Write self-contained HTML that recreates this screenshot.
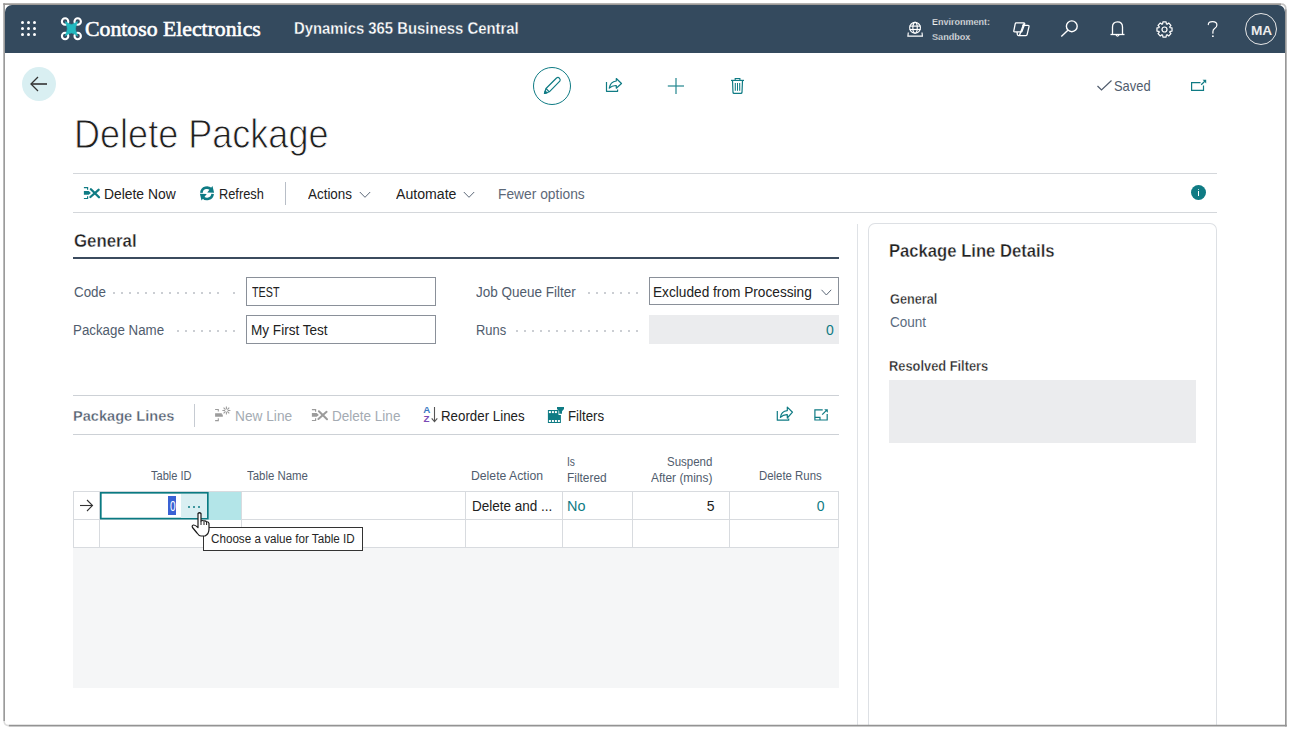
<!DOCTYPE html><html><head><meta charset='utf-8'><style>
html,body{margin:0;padding:0;background:#fff;width:1290px;height:730px;overflow:hidden;position:relative}
.t{position:absolute;line-height:1;white-space:nowrap;transform-origin:0 0}
.b{position:absolute;box-sizing:border-box;overflow:visible}
</style></head><body>
<div class='b' style='left:5px;top:5px;width:1280px;height:47.5px;background:#344a5e;border-radius:7px 7px 0 0'></div>
<div class='b' style='left:20.8px;top:20.9px;width:3px;height:3px;background:#fff;border-radius:50%'></div>
<div class='b' style='left:20.8px;top:27.0px;width:3px;height:3px;background:#fff;border-radius:50%'></div>
<div class='b' style='left:20.8px;top:33.099999999999994px;width:3px;height:3px;background:#fff;border-radius:50%'></div>
<div class='b' style='left:26.9px;top:20.9px;width:3px;height:3px;background:#fff;border-radius:50%'></div>
<div class='b' style='left:26.9px;top:27.0px;width:3px;height:3px;background:#fff;border-radius:50%'></div>
<div class='b' style='left:26.9px;top:33.099999999999994px;width:3px;height:3px;background:#fff;border-radius:50%'></div>
<div class='b' style='left:33.0px;top:20.9px;width:3px;height:3px;background:#fff;border-radius:50%'></div>
<div class='b' style='left:33.0px;top:27.0px;width:3px;height:3px;background:#fff;border-radius:50%'></div>
<div class='b' style='left:33.0px;top:33.099999999999994px;width:3px;height:3px;background:#fff;border-radius:50%'></div>
<svg class='b' style='left:56px;top:12px;' width='32' height='34' viewBox='0 0 32 34'>
<g fill='none' stroke='#fff' stroke-width='2.1'>
<circle cx='9.1' cy='9.5' r='3.2'/><circle cx='21.7' cy='9.5' r='3.2'/><circle cx='9.1' cy='24' r='3.2'/><circle cx='21.7' cy='24' r='3.2'/>
</g>
<path d='M9.2 9.5 L13.3 11.83 Q15.4 13 17.5 11.83 L21.6 9.5 L19.93 14.3 Q19.1 16.7 19.93 19.1 L21.6 23.9 L17.5 21.57 Q15.4 20.4 13.3 21.57 L9.2 23.9 L10.87 19.1 Q11.7 16.7 10.87 14.3 Z' fill='#22b8bf' stroke='#22b8bf' stroke-width='0.6' stroke-linejoin='round'/>
</svg>
<span class='t' style='left:84.61px;top:17.72px;font-size:22.0px;font-weight:400;font-family:"Liberation Serif",sans-serif;color:#ffffff;transform:scaleX(0.9886);-webkit-text-stroke:0.6px #fff;'>Contoso Electronics</span>
<span class='t' style='left:293.77px;top:21.4px;font-size:16.0px;font-weight:700;font-family:"Liberation Sans",sans-serif;color:#ffffff;transform:scaleX(0.9288);-webkit-text-stroke:0.3px #344a5e;'>Dynamics 365 Business Central</span>
<svg class='b' style='left:906px;top:21px;' width='18' height='17' viewBox='0 0 18 17'>
<g fill='none' stroke='#fff' stroke-width='1.15'>
<circle cx='9.05' cy='6.8' r='5.4'/><ellipse cx='9.05' cy='6.8' rx='2.2' ry='5.4'/><line x1='3.6' y1='5.1' x2='14.5' y2='5.1'/><line x1='3.6' y1='8.5' x2='14.5' y2='8.5'/>
<path d='M2.3 11.5 L1.9 15.1 H16.4 L16 11.5'/>
</g></svg>
<span class='t' style='left:932.2px;top:16.73px;font-size:9.5px;font-weight:700;font-family:"Liberation Sans",sans-serif;color:#f0f0f0;transform:scaleX(0.9459);-webkit-text-stroke:0.25px #344a5e;'>Environment:</span>
<span class='t' style='left:932.2px;top:31.68px;font-size:9.5px;font-weight:700;font-family:"Liberation Sans",sans-serif;color:#f0f0f0;transform:scaleX(0.9575);-webkit-text-stroke:0.25px #344a5e;'>Sandbox</span>
<svg class='b' style='left:1008px;top:17px;' width='26' height='24' viewBox='0 0 26 24'>
<g fill='none' stroke='#fff' stroke-width='1.3' stroke-linejoin='round'>
<path d='M8.2 5.9 H15.8 Q17 5.9 16.6 7.2 L13.8 14.8 H6.6 Q5.6 14.8 5.8 13.8 L7.2 6.8 Q7.4 5.9 8.2 5.9Z'/>
<path d='M14.3 8.4 H20 Q21.2 8.4 21 9.6 L19.1 17.7 Q18.9 18.6 18 18.6 H10.5 Q9.6 18.6 9.4 17.7 L9 14.8'/>
<line x1='15.9' y1='6.6' x2='11.4' y2='18.4'/>
</g></svg>
<svg class='b' style='left:1059px;top:19px;' width='21' height='20' viewBox='0 0 21 20'>
<g fill='none' stroke='#fff' stroke-width='1.4'>
<circle cx='12.8' cy='7.3' r='5.4'/><line x1='8.9' y1='11.2' x2='2.3' y2='17.6'/>
</g></svg>
<svg class='b' style='left:1109px;top:20px;' width='17' height='18' viewBox='0 0 17 18'>
<g fill='none' stroke='#fff' stroke-width='1.3'>
<path d='M3.5 14.5 V7 Q3.5 1.8 8.5 1.8 Q13.5 1.8 13.5 7 V14.5'/><line x1='1.5' y1='14.5' x2='15.5' y2='14.5'/>
<path d='M7 15 Q8.5 17.3 10 15'/>
</g></svg>
<svg class='b' style='left:1156.4px;top:20.6px;' width='17' height='17' viewBox='0 0 17 17'><g fill='none' stroke='#fff' stroke-width='1.2' stroke-linejoin='round'><path d='M13.98 6.61 L16.03 6.90 L16.03 10.10 L13.98 10.39 L13.71 11.04 L14.96 12.69 L12.69 14.96 L11.04 13.71 L10.39 13.98 L10.10 16.03 L6.90 16.03 L6.61 13.98 L5.96 13.71 L4.31 14.96 L2.04 12.69 L3.29 11.04 L3.02 10.39 L0.97 10.10 L0.97 6.90 L3.02 6.61 L3.29 5.96 L2.04 4.31 L4.31 2.04 L5.96 3.29 L6.61 3.02 L6.90 0.97 L10.10 0.97 L10.39 3.02 L11.04 3.29 L12.69 2.04 L14.96 4.31 L13.71 5.96Z'/><circle cx='8.5' cy='8.5' r='2.5'/></g></svg>
<svg class='b' style='left:1205px;top:19px;' width='16' height='20' viewBox='0 0 16 20'><g fill='none' stroke='#fff' stroke-width='1.2' stroke-linecap='round'><path d='M3.3 5.6 Q3.3 2.6 7.6 2.6 Q11.9 2.6 11.9 6 Q11.9 8.2 9.6 9.6 Q7.9 10.7 7.9 12.8 V14.2'/></g><circle cx='7.9' cy='17.2' r='0.9' fill='#fff'/></svg>
<div class='b' style='left:1244.6px;top:12.6px;width:32.6px;height:32.6px;border:1.2px solid #e6e6e6;border-radius:50%'></div>
<span class='t' style='left:1250.99px;top:24.32px;font-size:13.5px;font-weight:700;font-family:"Liberation Sans",sans-serif;color:#ececec;transform:scaleX(1.01);'>MA</span>
<div class='b' style='left:22px;top:67px;width:34px;height:34px;background:#d9eff2;border-radius:50%'></div>
<svg class='b' style='left:29px;top:75px;' width='20' height='18' viewBox='0 0 20 18'><g fill='none' stroke='#333' stroke-width='1.3'><path d='M9 2 L2 9 L9 16'/><line x1='2.3' y1='9' x2='18' y2='9' stroke-width='1.6'/></g></svg>
<div class='b' style='left:532.8px;top:66.8px;width:38px;height:38px;border:1.6px solid #0f7b84;border-radius:50%'></div>
<svg class='b' style='left:542px;top:76px;' width='20' height='20' viewBox='0 0 20 20'><g fill='none' stroke='#0f7b84' stroke-width='1.2' stroke-linejoin='round'><path d='M2.5 17.5 L4 12.5 L14.5 2 Q16.2 0.8 17.5 2.3 Q18.8 3.8 17.8 5.2 L7.3 15.8 Z'/><line x1='4' y1='12.5' x2='7.3' y2='15.8'/><path d='M2.5 17.5 L3.2 15 L5 16.8Z' fill='#0f7b84'/></g></svg>
<svg class='b' style='left:604px;top:77px;' width='19' height='17' viewBox='0 0 19 17'><g fill='none' stroke='#0f7b84' stroke-width='1.2' stroke-linejoin='round'><path d='M2.5 5 V14.3 H13.6 V12.4'/><path d='M5.3 11.2 Q6.2 4.6 12.3 4 V1.5 L17.5 6.5 L12.3 11.2 V8.5 Q8 8.3 5.3 11.2 Z'/></g></svg>
<svg class='b' style='left:666px;top:76px;' width='20' height='20' viewBox='0 0 20 20'><g stroke='#2a8b93' stroke-width='1.25'><line x1='1.8' y1='10' x2='18' y2='10'/><line x1='10' y1='2' x2='10' y2='18'/></g></svg>
<svg class='b' style='left:730px;top:77px;' width='15' height='18' viewBox='0 0 15 18'><g fill='none' stroke='#0f7b84' stroke-width='1.2'><path d='M5.2 3 V1.5 H9.9 V3' stroke-width='1.1'/><line x1='1' y1='3.4' x2='14' y2='3.4'/><path d='M2.5 3.4 L3 15.4 Q3.1 16.4 4 16.4 H11 Q11.9 16.4 12 15.4 L12.5 3.4'/><g stroke-width='1.05'><line x1='5.3' y1='6' x2='5.3' y2='13.8'/><line x1='7.5' y1='6' x2='7.5' y2='13.8'/><line x1='9.7' y1='6' x2='9.7' y2='13.8'/></g></g></svg>
<svg class='b' style='left:1096px;top:79px;' width='17' height='13' viewBox='0 0 17 13'><path d='M1.5 7 L5.5 11 L15.5 1.5' fill='none' stroke='#505c6d' stroke-width='1.2'/></svg>
<span class='t' style='left:1113.81px;top:78.67px;font-size:14.5px;font-weight:400;font-family:"Liberation Sans",sans-serif;color:#505c6d;transform:scaleX(0.89);'>Saved</span>
<svg class='b' style='left:1189px;top:78px;' width='19' height='15' viewBox='0 0 19 15'><g fill='none' stroke='#0f7b84' stroke-width='1.2'><path d='M11.5 4.6 H2.6 V12.3 H14.5 V7.4'/><path d='M12.2 6.7 L15.8 3.2'/></g><path d='M13.6 1.8 H17.2 V5.4Z' fill='#0f7b84'/></svg>
<span class='t' style='left:73.83px;top:113.58px;font-size:40.5px;font-weight:400;font-family:"Liberation Sans",sans-serif;color:#1f1f1f;transform:scaleX(0.8901);-webkit-text-stroke:0.9px #fff;'>Delete Package</span>
<div class='b' style='left:73px;top:173px;width:1144px;height:1px;background:#d4d7db'></div>
<div class='b' style='left:73px;top:212px;width:1144px;height:1px;background:#d4d7db'></div>
<svg class='b' style='left:83px;top:186px;' width='18' height='15' viewBox='0 0 18 15'><g fill='none' stroke='#0f7b84' stroke-width='1.2'><path d='M0.9 1.6 H4.6 V3.7'/><path d='M0.9 12.5 H4.6 V10.2'/></g><path d='M0.9 5 H5.7 L7.9 6.9 L5.7 8.8 H0.9 Z' fill='#0f7b84'/><g stroke='#0f7b84' stroke-width='2.3' stroke-linecap='round'><path d='M7.9 3.2 L16 11.2'/><path d='M15.6 3.8 L7.4 11'/></g></svg>
<span class='t' style='left:103.81px;top:186.7px;font-size:14.0px;font-weight:400;font-family:"Liberation Sans",sans-serif;color:#212121;transform:scaleX(0.9903);'>Delete Now</span>
<svg class='b' style='left:199px;top:185px;' width='16' height='17' viewBox='0 0 16 17'><g fill='none' stroke='#0f7b84' stroke-width='2.6'><path d='M2.35 7.8 A5.65 5.65 0 0 1 12.6 5.06'/><path d='M13.65 8.8 A5.65 5.65 0 0 1 3.4 11.54'/></g><path d='M13.5 1 L15.1 7.8 L8.2 7.5Z M2.5 15.6 L0.9 8.8 L7.8 9.1Z' fill='#0f7b84'/></svg>
<span class='t' style='left:218.59px;top:186.7px;font-size:14.0px;font-weight:400;font-family:"Liberation Sans",sans-serif;color:#212121;transform:scaleX(0.9146);'>Refresh</span>
<div class='b' style='left:285px;top:182px;width:1px;height:23px;background:#b8bec7'></div>
<span class='t' style='left:307.9px;top:186.7px;font-size:14.0px;font-weight:400;font-family:"Liberation Sans",sans-serif;color:#212121;transform:scaleX(0.9587);'>Actions</span>
<svg class='b' style='left:359px;top:191px;' width='12' height='8' viewBox='0 0 12 8'><path d='M0.8 1 L6 6.3 L11.2 1' fill='none' stroke='#5c6878' stroke-width='1'/></svg>
<span class='t' style='left:395.5px;top:186.7px;font-size:14.0px;font-weight:400;font-family:"Liberation Sans",sans-serif;color:#212121;transform:scaleX(1.0083);'>Automate</span>
<svg class='b' style='left:463px;top:191px;' width='12' height='8' viewBox='0 0 12 8'><path d='M0.8 1 L6 6.3 L11.2 1' fill='none' stroke='#5c6878' stroke-width='1'/></svg>
<span class='t' style='left:497.91px;top:186.7px;font-size:14.0px;font-weight:400;font-family:"Liberation Sans",sans-serif;color:#5c6878;transform:scaleX(0.9862);'>Fewer options</span>
<div class='b' style='left:1191px;top:185px;width:15px;height:15px;background:#0f7b84;border-radius:50%'></div>
<div class='b' style='left:1197.8px;top:188.8px;width:1.6px;height:1.6px;background:#fff;border-radius:50%'></div>
<div class='b' style='left:1197.8px;top:191.3px;width:1.6px;height:5.2px;background:#fff'></div>
<span class='t' style='left:73.5px;top:232.52px;font-size:17.5px;font-weight:700;font-family:"Liberation Sans",sans-serif;color:#212121;transform:scaleX(0.9609);-webkit-text-stroke:0.35px #fff;'>General</span>
<div class='b' style='left:73px;top:257px;width:766px;height:2px;background:#3b4b5e'></div>
<span class='t' style='left:73.5px;top:285.2px;font-size:14.0px;font-weight:400;font-family:"Liberation Sans",sans-serif;color:#505c6d;transform:scaleX(0.9545);'>Code</span>
<div class='b' style='left:113px;top:292px;width:2px;height:2px;background:#cbced3'></div>
<div class='b' style='left:121px;top:292px;width:2px;height:2px;background:#cbced3'></div>
<div class='b' style='left:129px;top:292px;width:2px;height:2px;background:#cbced3'></div>
<div class='b' style='left:137px;top:292px;width:2px;height:2px;background:#cbced3'></div>
<div class='b' style='left:145px;top:292px;width:2px;height:2px;background:#cbced3'></div>
<div class='b' style='left:153px;top:292px;width:2px;height:2px;background:#cbced3'></div>
<div class='b' style='left:161px;top:292px;width:2px;height:2px;background:#cbced3'></div>
<div class='b' style='left:169px;top:292px;width:2px;height:2px;background:#cbced3'></div>
<div class='b' style='left:177px;top:292px;width:2px;height:2px;background:#cbced3'></div>
<div class='b' style='left:185px;top:292px;width:2px;height:2px;background:#cbced3'></div>
<div class='b' style='left:193px;top:292px;width:2px;height:2px;background:#cbced3'></div>
<div class='b' style='left:201px;top:292px;width:2px;height:2px;background:#cbced3'></div>
<div class='b' style='left:209px;top:292px;width:2px;height:2px;background:#cbced3'></div>
<div class='b' style='left:217px;top:292px;width:2px;height:2px;background:#cbced3'></div>
<div class='b' style='left:233px;top:292px;width:2px;height:2px;background:#cbced3'></div>
<div class='b' style='left:246px;top:277px;width:190px;height:29px;border:1px solid #8a9099'></div>
<span class='t' style='left:252.4px;top:285.1px;font-size:14.0px;font-weight:400;font-family:"Liberation Sans",sans-serif;color:#212121;transform:scaleX(0.7667);'>TEST</span>
<span class='t' style='left:72.55px;top:322.9px;font-size:14.0px;font-weight:400;font-family:"Liberation Sans",sans-serif;color:#505c6d;transform:scaleX(0.9516);'>Package Name</span>
<div class='b' style='left:177px;top:330px;width:2px;height:2px;background:#cbced3'></div>
<div class='b' style='left:185px;top:330px;width:2px;height:2px;background:#cbced3'></div>
<div class='b' style='left:193px;top:330px;width:2px;height:2px;background:#cbced3'></div>
<div class='b' style='left:201px;top:330px;width:2px;height:2px;background:#cbced3'></div>
<div class='b' style='left:209px;top:330px;width:2px;height:2px;background:#cbced3'></div>
<div class='b' style='left:217px;top:330px;width:2px;height:2px;background:#cbced3'></div>
<div class='b' style='left:225px;top:330px;width:2px;height:2px;background:#cbced3'></div>
<div class='b' style='left:233px;top:330px;width:2px;height:2px;background:#cbced3'></div>
<div class='b' style='left:246px;top:315px;width:190px;height:29px;border:1px solid #8a9099'></div>
<span class='t' style='left:251.43px;top:323.1px;font-size:14.0px;font-weight:400;font-family:"Liberation Sans",sans-serif;color:#212121;transform:scaleX(0.9692);'>My First Test</span>
<span class='t' style='left:476.2px;top:285.1px;font-size:14.0px;font-weight:400;font-family:"Liberation Sans",sans-serif;color:#505c6d;transform:scaleX(0.9625);'>Job Queue Filter</span>
<div class='b' style='left:588px;top:292px;width:2px;height:2px;background:#cbced3'></div>
<div class='b' style='left:596px;top:292px;width:2px;height:2px;background:#cbced3'></div>
<div class='b' style='left:604px;top:292px;width:2px;height:2px;background:#cbced3'></div>
<div class='b' style='left:612px;top:292px;width:2px;height:2px;background:#cbced3'></div>
<div class='b' style='left:620px;top:292px;width:2px;height:2px;background:#cbced3'></div>
<div class='b' style='left:628px;top:292px;width:2px;height:2px;background:#cbced3'></div>
<div class='b' style='left:636px;top:292px;width:2px;height:2px;background:#cbced3'></div>
<div class='b' style='left:649px;top:277px;width:190px;height:28px;border:1px solid #8a9099'></div>
<span class='t' style='left:653.32px;top:285.1px;font-size:14.0px;font-weight:400;font-family:"Liberation Sans",sans-serif;color:#212121;transform:scaleX(0.9764);'>Excluded from Processing</span>
<svg class='b' style='left:820.5px;top:289px;' width='11' height='8' viewBox='0 0 11 8'><path d='M0.5 0.8 L5.35 6 L10.2 0.8' fill='none' stroke='#5c6878' stroke-width='1'/></svg>
<span class='t' style='left:475.58px;top:323.1px;font-size:14.0px;font-weight:400;font-family:"Liberation Sans",sans-serif;color:#505c6d;transform:scaleX(0.9219);'>Runs</span>
<div class='b' style='left:516px;top:330px;width:2px;height:2px;background:#cbced3'></div>
<div class='b' style='left:524px;top:330px;width:2px;height:2px;background:#cbced3'></div>
<div class='b' style='left:532px;top:330px;width:2px;height:2px;background:#cbced3'></div>
<div class='b' style='left:540px;top:330px;width:2px;height:2px;background:#cbced3'></div>
<div class='b' style='left:548px;top:330px;width:2px;height:2px;background:#cbced3'></div>
<div class='b' style='left:556px;top:330px;width:2px;height:2px;background:#cbced3'></div>
<div class='b' style='left:564px;top:330px;width:2px;height:2px;background:#cbced3'></div>
<div class='b' style='left:572px;top:330px;width:2px;height:2px;background:#cbced3'></div>
<div class='b' style='left:580px;top:330px;width:2px;height:2px;background:#cbced3'></div>
<div class='b' style='left:588px;top:330px;width:2px;height:2px;background:#cbced3'></div>
<div class='b' style='left:596px;top:330px;width:2px;height:2px;background:#cbced3'></div>
<div class='b' style='left:604px;top:330px;width:2px;height:2px;background:#cbced3'></div>
<div class='b' style='left:612px;top:330px;width:2px;height:2px;background:#cbced3'></div>
<div class='b' style='left:620px;top:330px;width:2px;height:2px;background:#cbced3'></div>
<div class='b' style='left:628px;top:330px;width:2px;height:2px;background:#cbced3'></div>
<div class='b' style='left:636px;top:330px;width:2px;height:2px;background:#cbced3'></div>
<div class='b' style='left:649px;top:315px;width:190px;height:29px;background:#ebecee'></div>
<span class='t' style='left:826.0px;top:323.1px;font-size:14.0px;font-weight:400;font-family:"Liberation Sans",sans-serif;color:#0f7b84;'>0</span>
<div class='b' style='left:857px;top:224px;width:1px;height:501px;background:#dfe2e6'></div>
<div class='b' style='left:868px;top:223px;width:349px;height:502px;border:1px solid #dde0e4;border-bottom:none;border-radius:7px 7px 0 0'></div>
<span class='t' style='left:888.9px;top:241.67px;font-size:18.5px;font-weight:700;font-family:"Liberation Sans",sans-serif;color:#212121;transform:scaleX(0.8995);-webkit-text-stroke:0.35px #fff;'>Package Line Details</span>
<span class='t' style='left:889.8px;top:292.0px;font-size:14.0px;font-weight:700;font-family:"Liberation Sans",sans-serif;color:#212121;transform:scaleX(0.9077);-webkit-text-stroke:0.35px #fff;'>General</span>
<span class='t' style='left:889.8px;top:314.78px;font-size:14.5px;font-weight:400;font-family:"Liberation Sans",sans-serif;color:#5a6b80;transform:scaleX(0.9333);'>Count</span>
<span class='t' style='left:888.88px;top:359.0px;font-size:14.0px;font-weight:700;font-family:"Liberation Sans",sans-serif;color:#212121;transform:scaleX(0.9178);-webkit-text-stroke:0.35px #fff;'>Resolved Filters</span>
<div class='b' style='left:889px;top:380px;width:307px;height:63px;background:#ebecee'></div>
<div class='b' style='left:73px;top:395px;width:766px;height:1px;background:#cdd1d6'></div>
<div class='b' style='left:73px;top:434px;width:766px;height:1px;background:#cdd1d6'></div>
<span class='t' style='left:72.56px;top:407.52px;font-size:15.5px;font-weight:700;font-family:"Liberation Sans",sans-serif;color:#505c6d;transform:scaleX(0.9415);-webkit-text-stroke:0.35px #fff;'>Package Lines</span>
<div class='b' style='left:194px;top:404px;width:1px;height:23px;background:#c6cbd2'></div>
<svg class='b' style='left:213px;top:406px;' width='19' height='16' viewBox='0 0 19 16'><g fill='none' stroke='#9c9c9c' stroke-width='1.1'><path d='M2.1 3.5 H5.3 V5.5'/><path d='M2.1 14.6 H5.3 V12.2'/></g><path d='M2.1 7.2 H8.8 V8.4 H9.8 V10.8 H2.1Z' fill='#9c9c9c'/><g stroke='#9c9c9c' stroke-width='1.1'><line x1='14.70' y1='4.50' x2='17.40' y2='4.50'/><line x1='14.32' y1='5.42' x2='16.23' y2='7.33'/><line x1='13.40' y1='5.80' x2='13.40' y2='8.50'/><line x1='12.48' y1='5.42' x2='10.57' y2='7.33'/><line x1='12.10' y1='4.50' x2='9.40' y2='4.50'/><line x1='12.48' y1='3.58' x2='10.57' y2='1.67'/><line x1='13.40' y1='3.20' x2='13.40' y2='0.50'/><line x1='14.32' y1='3.58' x2='16.23' y2='1.67'/></g></svg>
<span class='t' style='left:234.82px;top:408.9px;font-size:14.0px;font-weight:400;font-family:"Liberation Sans",sans-serif;color:#a4abb3;transform:scaleX(0.9789);'>New Line</span>
<svg class='b' style='left:311px;top:408px;' width='18' height='15' viewBox='0 0 18 15'><g fill='none' stroke='#9c9c9c' stroke-width='1.2'><path d='M0.9 1.6 H4.6 V3.7'/><path d='M0.9 12.5 H4.6 V10.2'/></g><path d='M0.9 5 H5.7 L7.9 6.9 L5.7 8.8 H0.9 Z' fill='#9c9c9c'/><g stroke='#9c9c9c' stroke-width='2.0' stroke-linecap='round'><path d='M7.9 3.2 L16 11.2'/><path d='M15.6 3.8 L7.4 11'/></g></svg>
<span class='t' style='left:331.93px;top:408.9px;font-size:14.0px;font-weight:400;font-family:"Liberation Sans",sans-serif;color:#a4abb3;transform:scaleX(0.9657);'>Delete Line</span>
<span class='t' style='left:423.3px;top:405.4px;font-size:9.8px;font-family:"Liberation Sans";color:#3a78c2;font-weight:700'>A</span>
<span class='t' style='left:423.5px;top:413.6px;font-size:9.8px;font-family:"Liberation Sans";color:#7b4bb5;font-weight:700'>Z</span>
<svg class='b' style='left:430px;top:406px;' width='9' height='17' viewBox='0 0 9 17'><g fill='none' stroke='#555' stroke-width='1.1'><line x1='4.5' y1='1' x2='4.5' y2='15.5'/><path d='M1.7 12.3 L4.5 15.6 L7.3 12.3'/></g></svg>
<span class='t' style='left:441.45px;top:408.9px;font-size:14.0px;font-weight:400;font-family:"Liberation Sans",sans-serif;color:#212121;transform:scaleX(0.9506);'>Reorder Lines</span>
<svg class='b' style='left:547px;top:406px;' width='18' height='18' viewBox='0 0 18 18'><path d='M0.9 3.9 H11.5 V9.1 H13.9 V16.9 H0.9Z' fill='#0f7b84'/><path d='M10 0.9 H17 V2.9 L15 5.2 V7.8 H12.2 V5.2 L10 2.9Z' fill='#0f7b84'/><g fill='#fff'><rect x='1.9' y='5.1' width='2' height='2'/><rect x='4.9' y='5.1' width='2' height='2'/><rect x='7.9' y='5.1' width='2' height='2'/><rect x='1.9' y='14' width='2' height='2'/><rect x='4.9' y='14' width='2' height='2'/><rect x='7.9' y='14' width='2' height='2'/><rect x='10.9' y='14' width='2' height='2'/></g></svg>
<span class='t' style='left:567.65px;top:408.9px;font-size:14.0px;font-weight:400;font-family:"Liberation Sans",sans-serif;color:#212121;transform:scaleX(0.9486);'>Filters</span>
<svg class='b' style='left:776px;top:406px;' width='18' height='16' viewBox='0 0 18 16'><g fill='none' stroke='#0f7b84' stroke-width='1.2' stroke-linejoin='round'><path d='M1.3 5 V14.2 H12.7 V12.5'/><path d='M4.4 11.3 Q5.2 5.2 11.3 4.6 V1.1 L16.5 6.2 L11.3 12 V8.6 Q7.2 8.4 4.4 11.3 Z'/></g></svg>
<svg class='b' style='left:813px;top:408px;' width='16' height='14' viewBox='0 0 16 14'><g fill='none' stroke='#0f7b84' stroke-width='1.2'><path d='M9.7 1.8 H1.9 V12 H14.2 V6.1'/><path d='M1.9 9.3 H7 V12'/><path d='M9.2 6.6 L13.4 2.4'/></g><path d='M11.2 1.2 H14.8 V4.8Z' fill='#0f7b84'/></svg>
<span class='t' style='left:150.5px;top:469.98px;font-size:12.5px;font-weight:400;font-family:"Liberation Sans",sans-serif;color:#505c6d;transform:scaleX(0.8848);'>Table ID</span>
<span class='t' style='left:247.0px;top:469.98px;font-size:12.5px;font-weight:400;font-family:"Liberation Sans",sans-serif;color:#505c6d;transform:scaleX(0.9134);'>Table Name</span>
<span class='t' style='left:470.92px;top:469.77px;font-size:12.5px;font-weight:400;font-family:"Liberation Sans",sans-serif;color:#505c6d;transform:scaleX(0.9778);'>Delete Action</span>
<span class='t' style='left:567.28px;top:456.38px;font-size:12.5px;font-weight:400;font-family:"Liberation Sans",sans-serif;color:#505c6d;transform:scaleX(0.8222);'>Is</span>
<span class='t' style='left:567.15px;top:471.98px;font-size:12.5px;font-weight:400;font-family:"Liberation Sans",sans-serif;color:#505c6d;transform:scaleX(0.9525);'>Filtered</span>
<span class='t' style='left:666.98px;top:456.38px;font-size:12.5px;font-weight:400;font-family:"Liberation Sans",sans-serif;color:#505c6d;transform:scaleX(0.9188);'>Suspend</span>
<span class='t' style='left:651.2px;top:471.98px;font-size:12.5px;font-weight:400;font-family:"Liberation Sans",sans-serif;color:#505c6d;transform:scaleX(0.95);'>After (mins)</span>
<span class='t' style='left:758.79px;top:469.98px;font-size:12.5px;font-weight:400;font-family:"Liberation Sans",sans-serif;color:#505c6d;transform:scaleX(0.9118);'>Delete Runs</span>
<div class='b' style='left:73px;top:491px;width:766px;height:57px;border:1px solid #d8dbdf'></div>
<div class='b' style='left:73px;top:519px;width:766px;height:1px;background:#d8dbdf'></div>
<div class='b' style='left:99px;top:491px;width:1px;height:57px;background:#d8dbdf'></div>
<div class='b' style='left:241px;top:491px;width:1px;height:57px;background:#d8dbdf'></div>
<div class='b' style='left:465px;top:491px;width:1px;height:57px;background:#d8dbdf'></div>
<div class='b' style='left:562px;top:491px;width:1px;height:57px;background:#d8dbdf'></div>
<div class='b' style='left:632px;top:491px;width:1px;height:57px;background:#d8dbdf'></div>
<div class='b' style='left:729px;top:491px;width:1px;height:57px;background:#d8dbdf'></div>
<div class='b' style='left:73px;top:548px;width:766px;height:140px;background:#f5f6f7'></div>
<svg class='b' style='left:79px;top:499px;' width='15' height='13' viewBox='0 0 15 13'><g fill='none' stroke='#333' stroke-width='1.1'><line x1='1' y1='6.5' x2='13.5' y2='6.5'/><path d='M8 1 L13.5 6.5 L8 12'/></g></svg>
<div class='b' style='left:208px;top:491.5px;width:33px;height:28px;background:#b3e5e8'></div>
<div class='b' style='left:100px;top:492px;width:108px;height:27px;background:#fff'></div>
<svg class='b' style='left:99px;top:491px;' width='111' height='30' viewBox='0 0 111 30'><rect x='1.8' y='1.8' width='107' height='25.8' fill='none' stroke='#0a7a82' stroke-width='1.7'/></svg>
<div class='b' style='left:181px;top:493.5px;width:25.6px;height:24.2px;background:#d9eff2'></div>
<div class='b' style='left:188.3px;top:505.5px;width:2px;height:2px;background:#0f7b84;border-radius:50%'></div>
<div class='b' style='left:193px;top:505.5px;width:2px;height:2px;background:#0f7b84;border-radius:50%'></div>
<div class='b' style='left:197.9px;top:505.5px;width:2px;height:2px;background:#0f7b84;border-radius:50%'></div>
<div class='b' style='left:168px;top:496px;width:8px;height:19px;background:#3a62d4'></div>
<span class='t' style='left:169.6px;top:498.7px;font-size:14.0px;font-weight:400;font-family:"Liberation Sans",sans-serif;color:#ffffff;transform:scaleX(0.72);'>0</span>
<span class='t' style='left:472.34px;top:498.7px;font-size:14.0px;font-weight:400;font-family:"Liberation Sans",sans-serif;color:#212121;transform:scaleX(0.9646);'>Delete and ...</span>
<span class='t' style='left:567.47px;top:498.7px;font-size:14.0px;font-weight:400;font-family:"Liberation Sans",sans-serif;color:#0f7b84;transform:scaleX(1.0294);'>No</span>
<span class='t' style='left:706.7px;top:498.7px;font-size:14.0px;font-weight:400;font-family:"Liberation Sans",sans-serif;color:#212121;'>5</span>
<span class='t' style='left:816.7px;top:498.7px;font-size:14.0px;font-weight:400;font-family:"Liberation Sans",sans-serif;color:#0f7b84;'>0</span>
<div class='b' style='left:203px;top:526.5px;width:160px;height:24px;border:1px solid #333;background:#fff'></div>
<span class='t' style='left:211.0px;top:532.97px;font-size:12.5px;font-weight:400;font-family:"Liberation Sans",sans-serif;color:#262626;transform:scaleX(0.9325);'>Choose a value for Table ID</span>
<svg class='b' style='left:190px;top:511px;' width='22' height='27' viewBox='0 0 22 27'><path d='M8 2.5 Q9.5 1 11 2.5 V10 Q12.5 9 14 10 Q15.5 9.5 16.5 10.8 Q18.5 10.5 19 12.5 V18 Q19 23 15 25 H11 Q9 25 7 22 L2.5 16.5 Q1.5 14.5 3.5 14 Q5 13.8 8 16.5 Z' fill='#fff' stroke='#1a1a1a' stroke-width='1.2' stroke-linejoin='round'/><g stroke='#1a1a1a' stroke-width='1'><line x1='11' y1='10' x2='11' y2='14'/><line x1='14' y1='10.5' x2='14' y2='14'/><line x1='16.6' y1='11' x2='16.6' y2='14'/></g></svg>
<svg class='b' style='left:0;top:0' width='1290' height='730' viewBox='0 0 1290 730'><g fill='none' stroke-width='1.6'><path stroke='#9e9b98' d='M3.3 4.15 H1281.3'/><path stroke='#c4c4c4' d='M1281.3 4.15 Q1285.85 4.15 1285.85 9.3'/><path stroke='#969696' d='M4.15 3.3 V721'/><path stroke='#dcdcdc' d='M4.15 721 Q4.15 725.65 8.8 725.65'/><path stroke='#939393' d='M8.8 725.65 H1286.8'/><path stroke='#939393' d='M1285.85 9.3 V726.4'/></g></svg>
</body></html>
